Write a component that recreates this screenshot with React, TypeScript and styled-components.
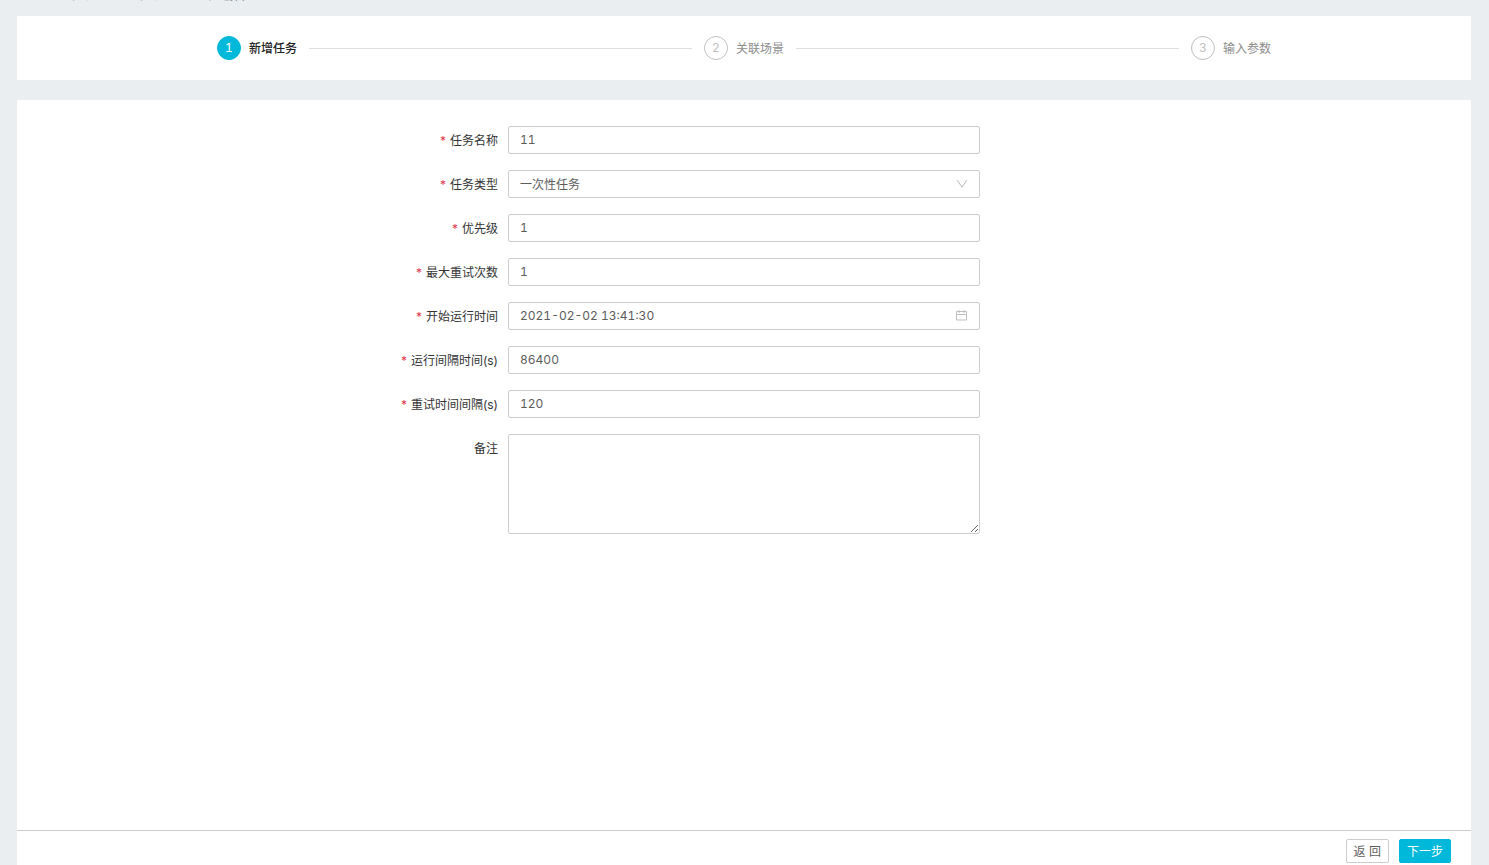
import React from "react";
import styled, { createGlobalStyle, css } from "styled-components";

const GlobalStyle = createGlobalStyle`
  *, *::before, *::after { box-sizing: border-box; }
  html, body, #root { height: 100%; }
  body {
    margin: 0;
    background: #eaeef1;
    color: #333;
    font: 12px/18px Inter, "Noto Sans CJK SC", sans-serif;
    overflow: hidden;
  }
  input, select, textarea, button {
    font: inherit;
    color: inherit;
  }
`;

const Page = styled.div`
  display: flex;
  flex-direction: column;
  height: 100%;
  padding: 0 18px 0 17px;
`;

const Breadcrumb = styled.nav`
  display: flex;
  flex: none;
  align-items: flex-end;
  height: 4px;
  margin-bottom: 12px;
  overflow: hidden;
  color: #777;
  font-family: "Noto Sans CJK SC", sans-serif;
`;

const Crumb = styled.a`
  color: inherit;
  line-height: 18px;
  text-decoration: none;

  &:not(:last-child)::after {
    content: "/";
    display: inline-block;
    width: 20px;
    font-family: Inter, sans-serif;
    text-align: center;
  }
`;

const StepsPanel = styled.section`
  flex: none;
  padding: 20px 200px;
  margin-bottom: 20px;
  background: #fff;
`;

const StepList = styled.ol`
  display: flex;
  margin: 0;
  padding: 0;
  list-style: none;
`;

const Step = styled.li<{ $active?: boolean }>`
  display: flex;
  align-items: center;
  gap: 8px;
  height: 24px;
  color: ${(p) => (p.$active ? "#222" : "#8c8c8c")};
  font-weight: ${(p) => (p.$active ? 500 : 400)};

  &:not(:last-child) {
    flex: 1;
    margin-right: 12px;
  }

  &:not(:last-child)::after {
    content: "";
    flex: 1;
    height: 1px;
    margin-left: 4px;
    background: #dedede;
  }
`;

const StepNumber = styled.span<{ $active?: boolean }>`
  width: 24px;
  height: 24px;
  border: 1px solid ${(p) => (p.$active ? "#00b8d9" : "#bfbfbf")};
  border-radius: 50%;
  background: ${(p) => (p.$active ? "#00b8d9" : "#fff")};
  color: ${(p) => (p.$active ? "#fff" : "#bfbfbf")};
  font-weight: 400;
  font-variant-numeric: tabular-nums;
  line-height: 22px;
  text-align: center;
`;

const StepTitle = styled.span`
  padding-top: 2px;
`;

const FormPanel = styled.form`
  display: flex;
  flex: 1;
  flex-direction: column;
  min-height: 0;
  background: #fff;
`;

const Fields = styled.div`
  display: flex;
  flex: 1;
  flex-direction: column;
  gap: 16px;
  padding-top: 26px;
`;

const Row = styled.div`
  display: grid;
  grid-template-columns: 491fr 472fr 491fr;
`;

const Label = styled.label<{ $required?: boolean }>`
  height: 28px;
  padding-right: 10px;
  line-height: 30px;
  text-align: right;

  ${(p) =>
    p.$required &&
    css`
      &::before {
        content: "*";
        margin-right: 4px;
        color: #e0364c;
      }
    `}
`;

const control = css`
  display: block;
  width: 100%;
  height: 28px;
  border: 1px solid #ccc;
  border-radius: 2px;
  background: #fff;
  color: #5c5c5c;
  font-variant-numeric: tabular-nums;
  outline: none;

  &:focus { border-color: #00b8d9; }
`;

const TextInput = styled.input`
  ${control}
  padding: 0 11px 2px;
`;

const Select = styled.select`
  ${control}
  padding: 2px 11px 0;
  appearance: none;
`;

const TextArea = styled.textarea`
  ${control}
  height: 100px;
  padding: 4px 11px;
  resize: vertical;
`;

const ControlBox = styled.div`
  position: relative;

  svg {
    position: absolute;
    top: 8px;
    right: 12px;
    pointer-events: none;
  }
`;

const Footer = styled.footer`
  display: flex;
  flex: none;
  justify-content: flex-end;
  gap: 10px;
  height: 35px;
  padding: 8px 20px 0;
  border-top: 1px solid #ccc;
`;

const Button = styled.button<{ $primary?: boolean }>`
  height: 24px;
  padding: 2px 7px 0;
  border: 1px solid ${(p) => (p.$primary ? "#00b8d9" : "#ccc")};
  border-radius: 2px;
  background: ${(p) => (p.$primary ? "#00b8d9" : "#fff")};
  color: ${(p) => (p.$primary ? "#fff" : "#5c5c5c")};
  cursor: pointer;
`;

const ChevronIcon = () => (
  <svg width="12" height="12" viewBox="0 0 12 12" fill="none" stroke="#b8b8b8" aria-hidden="true">
    <path d="M1.2 2.2 6 9.2 10.8 2.2" />
  </svg>
);

const CalendarIcon = () => (
  <svg width="12" height="12" viewBox="0 0 12 12" fill="none" stroke="#bfbfbf" aria-hidden="true">
    <path d="M.5 1.5h10v8.5H.5zM.5 4.5h10M3 0v3M8 0v3" />
  </svg>
);

interface Field {
  id: string;
  label: string;
  value: string;
  kind?: "select" | "date";
}

const fields: Field[] = [
  { id: "name", label: "任务名称", value: "11" },
  { id: "type", label: "任务类型", value: "一次性任务", kind: "select" },
  { id: "priority", label: "优先级", value: "1" },
  { id: "retries", label: "最大重试次数", value: "1" },
  { id: "start", label: "开始运行时间", value: "2021-02-02 13:41:30", kind: "date" },
  { id: "interval", label: "运行间隔时间(s)", value: "86400" },
  { id: "retryInterval", label: "重试时间间隔(s)", value: "120" },
];

const steps = ["新增任务", "关联场景", "输入参数"];
const crumbs = ["自动测试", "任务管理", "任务列表", "编辑"];

export default function App() {
  return (
    <>
      <GlobalStyle />
      <Page>
        <Breadcrumb>
          {crumbs.map((c) => (
            <Crumb key={c} href="#">{c}</Crumb>
          ))}
        </Breadcrumb>
        <StepsPanel>
          <StepList>
            {steps.map((title, i) => (
              <Step key={title} $active={i === 0}>
                <StepNumber $active={i === 0}>{i + 1}</StepNumber>
                <StepTitle>{title}</StepTitle>
              </Step>
            ))}
          </StepList>
        </StepsPanel>
        <FormPanel onSubmit={(e) => e.preventDefault()}>
          <Fields>
            {fields.map((f) => (
              <Row key={f.id}>
                <Label htmlFor={f.id} $required>{f.label}</Label>
                <ControlBox>
                  {f.kind === "select" ? (
                    <Select id={f.id} defaultValue={f.value}>
                      <option>{f.value}</option>
                    </Select>
                  ) : (
                    <TextInput id={f.id} defaultValue={f.value} />
                  )}
                  {f.kind === "select" && <ChevronIcon />}
                  {f.kind === "date" && <CalendarIcon />}
                </ControlBox>
              </Row>
            ))}
            <Row>
              <Label htmlFor="remark">备注</Label>
              <TextArea id="remark" />
            </Row>
          </Fields>
          <Footer>
            <Button type="button">返 回</Button>
            <Button type="submit" $primary>下一步</Button>
          </Footer>
        </FormPanel>
      </Page>
    </>
  );
}
